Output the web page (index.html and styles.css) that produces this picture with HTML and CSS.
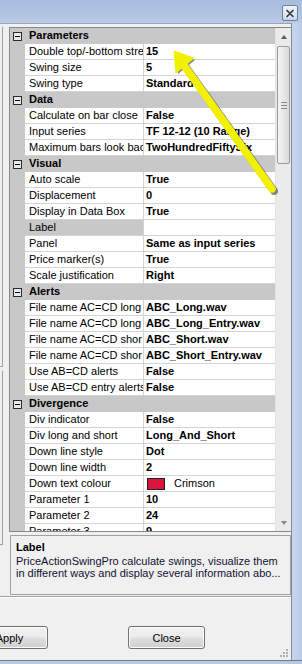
FILE: index.html
```html
<!DOCTYPE html>
<html>
<head>
<meta charset="utf-8">
<link rel="stylesheet" href="styles.css">
</head>
<body>
<div class="window">
  <div class="titlebar">
    <div class="closebtn">
      <svg width="10" height="9" viewBox="0 0 10 9"><path d="M2 1.5 L8 7.5 M8 1.5 L2 7.5" stroke="#fff" stroke-width="3.6" stroke-linecap="round"/><path d="M2 1.5 L8 7.5 M8 1.5 L2 7.5" stroke="#3d4a5c" stroke-width="1.8" stroke-linecap="round"/></svg>
    </div>
  </div>
  <div class="frame">
    <div class="client">
      <div class="main">
        <div class="leftstrip">
          <div class="lbox lbox1"></div>
          <div class="lbox lbox2"></div>
        </div>
        <div class="gridcol">
          <div class="grid">
            <div class="rows">
              <div class="row cat"><span class="gut"><i class="minus"></i></span><span class="catname">Parameters</span></div>
              <div class="row"><span class="gut"></span><span class="name">Double top/-bottom stre</span><span class="val">15</span></div>
              <div class="row"><span class="gut"></span><span class="name">Swing size</span><span class="val">5</span></div>
              <div class="row"><span class="gut"></span><span class="name">Swing type</span><span class="val">Standard</span></div>
              <div class="row cat"><span class="gut"><i class="minus"></i></span><span class="catname">Data</span></div>
              <div class="row"><span class="gut"></span><span class="name">Calculate on bar close</span><span class="val">False</span></div>
              <div class="row"><span class="gut"></span><span class="name">Input series</span><span class="val">TF 12-12 (10 Range)</span></div>
              <div class="row"><span class="gut"></span><span class="name">Maximum bars look bac</span><span class="val">TwoHundredFiftySix</span></div>
              <div class="row cat"><span class="gut"><i class="minus"></i></span><span class="catname">Visual</span></div>
              <div class="row"><span class="gut"></span><span class="name">Auto scale</span><span class="val">True</span></div>
              <div class="row"><span class="gut"></span><span class="name">Displacement</span><span class="val">0</span></div>
              <div class="row"><span class="gut"></span><span class="name">Display in Data Box</span><span class="val">True</span></div>
              <div class="row"><span class="gut"></span><span class="name sel">Label</span><span class="val"></span></div>
              <div class="row"><span class="gut"></span><span class="name">Panel</span><span class="val">Same as input series</span></div>
              <div class="row"><span class="gut"></span><span class="name">Price marker(s)</span><span class="val">True</span></div>
              <div class="row"><span class="gut"></span><span class="name">Scale justification</span><span class="val">Right</span></div>
              <div class="row cat"><span class="gut"><i class="minus"></i></span><span class="catname">Alerts</span></div>
              <div class="row"><span class="gut"></span><span class="name">File name AC=CD long</span><span class="val">ABC_Long.wav</span></div>
              <div class="row"><span class="gut"></span><span class="name">File name AC=CD long</span><span class="val">ABC_Long_Entry.wav</span></div>
              <div class="row"><span class="gut"></span><span class="name">File name AC=CD shor</span><span class="val">ABC_Short.wav</span></div>
              <div class="row"><span class="gut"></span><span class="name">File name AC=CD shor</span><span class="val">ABC_Short_Entry.wav</span></div>
              <div class="row"><span class="gut"></span><span class="name">Use AB=CD alerts</span><span class="val">False</span></div>
              <div class="row"><span class="gut"></span><span class="name">Use AB=CD entry alerts</span><span class="val">False</span></div>
              <div class="row cat"><span class="gut"><i class="minus"></i></span><span class="catname">Divergence</span></div>
              <div class="row"><span class="gut"></span><span class="name">Div indicator</span><span class="val">False</span></div>
              <div class="row"><span class="gut"></span><span class="name">Div long and short</span><span class="val">Long_And_Short</span></div>
              <div class="row"><span class="gut"></span><span class="name">Down line style</span><span class="val">Dot</span></div>
              <div class="row"><span class="gut"></span><span class="name">Down line width</span><span class="val">2</span></div>
              <div class="row"><span class="gut"></span><span class="name">Down text colour</span><span class="val colorval"><i class="swatch"></i><span class="cname">Crimson</span></span></div>
              <div class="row"><span class="gut"></span><span class="name">Parameter 1</span><span class="val">10</span></div>
              <div class="row"><span class="gut"></span><span class="name">Parameter 2</span><span class="val">24</span></div>
              <div class="row"><span class="gut"></span><span class="name">Parameter 3</span><span class="val">9</span></div>
            </div>
            <div class="scrollbar">
              <div class="sbtn"><i class="up"></i></div>
              <div class="track">
                <div class="thumb"><i class="grip"></i></div>
              </div>
              <div class="sbtn"><i class="down"></i></div>
            </div>
          </div>
          <div class="desc">
            <div class="dtitle">Label</div>
            <div class="dtext">PriceActionSwingPro calculate swings, visualize them</div>
            <div class="dtext">in different ways and display several information abo...</div>
          </div>
        </div>
      </div>
      <div class="sep"></div>
      <div class="buttons">
        <button class="btn apply">Apply</button>
        <button class="btn close">Close</button>
      </div>
      <div class="grip-corner">
        <svg width="10" height="10" viewBox="0 0 10 10"><g fill="#b0b0b0"><rect x="7" y="1" width="2" height="2"/><rect x="4" y="4" width="2" height="2"/><rect x="7" y="4" width="2" height="2"/><rect x="1" y="7" width="2" height="2"/><rect x="4" y="7" width="2" height="2"/><rect x="7" y="7" width="2" height="2"/></g></svg>
      </div>
    </div>
    <div class="rframe"></div>
  </div>
  <div class="bframe"></div>
  <svg class="arrow" width="302" height="664" viewBox="0 0 302 664">
    <g transform="translate(2,2)" opacity="0.55">
      <line x1="183" y1="64" x2="272" y2="189" stroke="#2a2a2a" stroke-width="8" stroke-linecap="round"/>
      <polygon points="174,51 193,58 176,72" fill="#2a2a2a"/>
    </g>
    <line x1="183" y1="64" x2="272" y2="189" stroke="#f2f200" stroke-width="7.5" stroke-linecap="round"/>
    <polygon points="174,51 194,58 176,73" fill="#f2f200" stroke="#f2f200" stroke-width="1" stroke-linejoin="round"/>
  </svg>
</div>
</body>
</html>
```

FILE: styles.css
```css
* { box-sizing: border-box; }
html, body { margin: 0; padding: 0; }
body {
  width: 302px;
  height: 664px;
  overflow: hidden;
  background: #f0f0f0;
  font-family: "Liberation Sans", Arial, sans-serif;
  font-size: 11px;
  color: #000;
}
.window {
  position: relative;
  width: 302px;
  height: 664px;
  display: flex;
  flex-direction: column;
  overflow: hidden;
}
.titlebar {
  height: 23px;
  flex: none;
  background: linear-gradient(#a5bcdc, #b9cbe5);
  display: flex;
  justify-content: flex-end;
  align-items: flex-start;
  padding: 5px 4px 0 0;
}
.closebtn {
  width: 16px;
  height: 16px;
  border: 1px solid #6e809c;
  border-radius: 2px;
  background: linear-gradient(#f0f4fa, #c9d6e8);
  display: flex;
  align-items: center;
  justify-content: center;
}
.closebtn svg { display: block; }
.frame {
  flex: 1;
  display: flex;
  min-height: 0;
}
.client {
  position: relative;
  width: 291px;
  flex: none;
  background: #f0f0f0;
  border-top: 1px solid #9aa6b6;
  padding-top: 3px;
  display: flex;
  flex-direction: column;
}
.rframe {
  flex: 1;
  border-left: 1px solid #7d8796;
  background: linear-gradient(90deg, #c8d7ec, #b7cae4);
}
.bframe {
  height: 4px;
  flex: none;
  border-top: 1px solid #6f7e95;
  background: #b7cae4;
}
.main {
  display: flex;
}
.leftstrip {
  width: 9px;
  flex: none;
  display: flex;
  flex-direction: column;
}
.lbox {
  width: 3px;
  border-right: 1px solid #a0a0a0;
  border-bottom: 1px solid #a0a0a0;
}
.lbox1 { height: 340px; }
.lbox2 { height: 174px; margin-top: 4px; }
.gridcol {
  width: 282px;
  flex: none;
  display: flex;
  flex-direction: column;
}
.grid {
  height: 505px;
  border: 1px solid #828790;
  border-right: none;
  display: flex;
  overflow: hidden;
  background: #fff;
}
.rows {
  width: 265px;
  flex: none;
  overflow: hidden;
}
.row {
  display: flex;
  height: 16px;
  line-height: 15px;
  white-space: nowrap;
}
.gut {
  width: 15px;
  flex: none;
  background: #c8c8c8;
  display: flex;
  align-items: center;
  justify-content: center;
}
.name {
  width: 119px;
  flex: none;
  padding-left: 4px;
  overflow: hidden;
  border-bottom: 1px solid #d4d4d4;
  border-right: 1px solid #d4d4d4;
}
.name.sel { background: #c8c8c8; }
.val {
  flex: 1;
  padding-left: 2px;
  font-weight: bold;
  overflow: hidden;
  border-bottom: 1px solid #d4d4d4;
}
.cat {
  background: #c8c8c8;
}
.catname {
  padding-left: 4px;
  font-weight: bold;
}
.minus {
  position: relative;
  display: block;
  width: 9px;
  height: 9px;
  border: 1px solid #2b2b2b;
  background: #e8e8e8;
}
.minus::after {
  content: "";
  position: absolute;
  left: 1px;
  top: 3px;
  width: 5px;
  height: 1px;
  background: #000;
}
.colorval {
  display: flex;
  align-items: center;
  font-weight: normal;
}
.swatch {
  display: block;
  width: 18px;
  height: 12px;
  margin-left: 1px;
  border: 1px solid #202020;
  background: #dc143c;
}
.cname {
  margin-left: 9px;
}
.scrollbar {
  width: 16px;
  flex: none;
  background: #ebebeb;
  border-left: 1px solid #e3e3e3;
  display: flex;
  flex-direction: column;
}
.sbtn {
  height: 17px;
  flex: none;
  display: flex;
  align-items: center;
  justify-content: center;
}
.up {
  display: block;
  width: 0;
  height: 0;
  border-left: 3.5px solid transparent;
  border-right: 3.5px solid transparent;
  border-bottom: 4px solid #5a5a5a;
}
.down {
  display: block;
  width: 0;
  height: 0;
  border-left: 3.5px solid transparent;
  border-right: 3.5px solid transparent;
  border-top: 4px solid #8a8a8a;
}
.track {
  flex: 1;
  padding-top: 1px;
}
.thumb {
  margin-left: 1px;
  width: 13px;
  height: 118px;
  border: 1px solid #9b9b9b;
  border-radius: 2px;
  background: linear-gradient(90deg, #f5f5f5, #e4e4e4 60%, #d9d9d9);
  display: flex;
  align-items: center;
  justify-content: center;
}
.grip {
  display: block;
  width: 6px;
  height: 7px;
  background: repeating-linear-gradient(#8a8a8a 0 1px, transparent 1px 3px);
}
.desc {
  margin-top: 3px;
  margin-left: 1px;
  height: 60px;
  border: 1px solid #a0a0a0;
  padding: 4px 0 0 5px;
  white-space: nowrap;
  overflow: hidden;
}
.dtitle {
  font-weight: bold;
  line-height: 15px;
}
.dtext {
  line-height: 12px;
  color: #101030;
}
.sep {
  margin-top: 1px;
  height: 2px;
  border-top: 1px solid #a0a0a0;
  border-bottom: 1px solid #ffffff;
}
.buttons {
  display: flex;
  padding-top: 28px;
  margin-left: -29px;
}
.btn {
  width: 77px;
  height: 23px;
  padding: 0;
  border: 1px solid #707070;
  border-radius: 3px;
  background: linear-gradient(#f2f2f2 0%, #ebebeb 45%, #dddddd 55%, #cfcfcf 100%);
  font-family: "Liberation Sans", Arial, sans-serif;
  font-size: 11px;
  color: #000;
  box-shadow: inset 0 0 0 1px #fcfcfc;
}
.apply { margin-right: 80px; }
.grip-corner {
  position: absolute;
  right: 2px;
  bottom: 2px;
  line-height: 0;
}
.arrow {
  position: absolute;
  left: 0;
  top: 0;
  pointer-events: none;
}
```
